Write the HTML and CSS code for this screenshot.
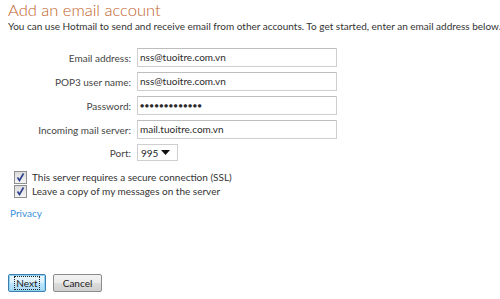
FILE: index.html
```html
<!DOCTYPE html>
<html>
<head>
<meta charset="utf-8">
<link rel="stylesheet" href="styles.css">
</head>
<body>
<div class="page">
  <h1 class="title">Add an email account</h1>
  <p class="intro">You can use Hotmail to send and receive email from other accounts. To get started, enter an email address below.</p>
  <div class="form">
    <label class="label">Email address:</label>
    <div class="field">nss@tuoitre.com.vn</div>
    <label class="label">POP3 user name:</label>
    <div class="field">nss@tuoitre.com.vn</div>
    <label class="label">Password:</label>
    <div class="field dots">●●●●●●●●●●●●●</div>
    <label class="label">Incoming mail server:</label>
    <div class="field">mail.tuoitre.com.vn</div>
    <label class="label">Port:</label>
    <div class="select"><span>995</span><svg class="arrow" width="9" height="5" viewBox="0 0 9 5"><path d="M0 0h9L4.5 5z" fill="#111"/></svg></div>
  </div>
  <div class="checks">
    <div class="check"><span class="box"><svg width="11" height="11" viewBox="0 0 11 11"><path d="M2.5 5.5l2 3 4-7" fill="none" stroke="#2a3e8c" stroke-width="1.6"/></svg></span><span>This server requires a secure connection (SSL)</span></div>
    <div class="check"><span class="box"><svg width="11" height="11" viewBox="0 0 11 11"><path d="M2.5 5.5l2 3 4-7" fill="none" stroke="#2a3e8c" stroke-width="1.6"/></svg></span><span>Leave a copy of my messages on the server</span></div>
  </div>
  <a class="privacy">Privacy</a>
  <div class="buttons">
    <button class="btn next"><span class="focus">Next</span></button>
    <button class="btn">Cancel</button>
  </div>
</div>
</body>
</html>
```
FILE: styles.css
```css
html, body {
  margin: 0;
  padding: 0;
  background: #fff;
}
.page {
  padding: 0 0 0 8px;
  font-family: "Lato", "Open Sans", sans-serif;
  color: #3c3c3c;
  width: 500px;
  height: 299px;
  box-sizing: border-box;
  overflow: hidden;
}
.title {
  margin: 0;
  font-weight: 300;
  font-size: 16.5px;
  line-height: 20px;
  color: #c2622a;
}
.intro {
  margin: 0;
  font-size: 10px;
  line-height: 13px;
  color: #333;
  white-space: nowrap;
}
.form {
  display: grid;
  grid-template-columns: 123px 200px;
  column-gap: 6px;
  row-gap: 5px;
  margin-top: 15px;
  align-items: center;
}
.label {
  text-align: right;
  font-size: 10px;
  color: #444;
}
.field {
  height: 19px;
  box-sizing: border-box;
  border: 1px solid #cfcfcf;
  border-top-color: #bdbdbd;
  padding: 0 0 0 2px;
  font-size: 10px;
  line-height: 17px;
  color: #2a2a2a;
}
.dots {
  font-size: 7px;
  letter-spacing: 0.6px;
}
.select {
  width: 41px;
  height: 17px;
  box-sizing: border-box;
  border: 1px solid #cfcfcf;
  display: flex;
  align-items: center;
  justify-content: space-between;
  padding: 0 7px 0 3px;
  font-size: 10px;
  color: #222;
}
.checks {
  margin-top: 10px;
  padding-left: 6px;
  display: flex;
  flex-direction: column;
  gap: 1px;
}
.check {
  display: flex;
  align-items: center;
  gap: 5px;
  font-size: 10px;
  line-height: 13px;
  color: #333;
}
.box {
  width: 13px;
  height: 13px;
  box-sizing: border-box;
  border: 1px solid #8e8f8f;
  background: linear-gradient(#dcdcdc, #f4f4f4);
  display: flex;
  align-items: center;
  justify-content: center;
}
.privacy {
  display: block;
  margin: 9px 0 0 2px;
  font-size: 10px;
  line-height: 13px;
  color: #3a8fd9;
}
.buttons {
  margin-top: 54px;
  display: flex;
  gap: 7px;
}
.btn {
  height: 18px;
  box-sizing: border-box;
  border: 1px solid #8c8c8c;
  border-radius: 2px;
  background: linear-gradient(#f2f2f2 0%, #ebebeb 50%, #dddddd 51%, #cfcfcf 100%);
  font-family: "Lato", "Open Sans", sans-serif;
  font-size: 10px;
  color: #222;
  padding: 0;
  width: 49px;
  line-height: 14px;
}
.next {
  width: 38px;
  border-color: #3c7fb1;
  box-shadow: 0 0 0 1px #8fd3f0 inset;
  background: linear-gradient(#eaf6fd 0%, #d9f0fc 50%, #bee6fd 51%, #a7d9f5 100%);
}
.focus {
  outline: 1px dotted #222;
  padding: 0 1px;
}
```
